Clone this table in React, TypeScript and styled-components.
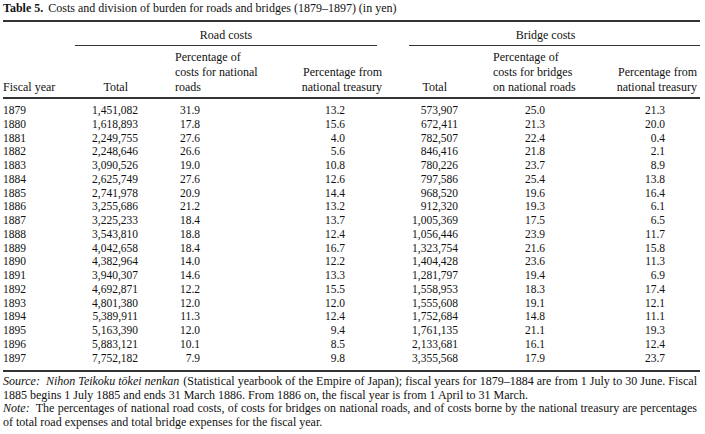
import React from "react";
import styled, { createGlobalStyle } from "styled-components";

const GlobalStyle = createGlobalStyle`
  html, body {
    margin: 0;
    background: #fff;
  }
  body {
    font-family: "Liberation Serif", "Times New Roman", serif;
    color: #111;
  }
`;

const Page = styled.div`
  width: 697px;
  padding-left: 3px;
`;

const Caption = styled.div`
  font-size: 12px;
  line-height: 16px;
  height: 20px;
  white-space: nowrap;
`;

const CaptionLabel = styled.b`
  margin-right: 5px;
`;

const Table = styled.table`
  width: 697px;
  table-layout: fixed;
  border-collapse: collapse;
  border-top: 2px solid #333;
  border-bottom: 2px solid #333;
  font-size: 11.5px;
`;

const GroupCell = styled.th`
  padding: 6px 0 0;
  font-weight: normal;
`;

const GroupRule = styled.div<{ $left: number; $right: number; $shift: number }>`
  margin-left: ${(p) => p.$left}px;
  margin-right: ${(p) => p.$right}px;
  padding-bottom: 3px;
  padding-right: ${(p) => p.$shift}px;
  border-bottom: 1px solid #333;
  line-height: 14px;
  font-size: 12px;
  text-align: center;
`;

const HeadRow = styled.tr`
  border-bottom: 2px solid #333;
`;

const HeadCell = styled.th<{ $align: string; $pad: string }>`
  padding: ${(p) => p.$pad};
  font-weight: normal;
  font-size: 12px;
  line-height: 15px;
  text-align: ${(p) => p.$align};
  vertical-align: bottom;
  white-space: nowrap;
`;

const Body = styled.tbody`
  tr:first-child td {
    padding-top: 5px;
  }
  tr:last-child td {
    padding-bottom: 5px;
  }
`;

const Cell = styled.td<{ $align: string; $pad: number }>`
  padding: 0;
  padding-${(p) => (p.$align === "left" ? "left" : "right")}: ${(p) => p.$pad}px;
  text-align: ${(p) => p.$align};
  line-height: 13.75px;
  white-space: nowrap;
`;

const Notes = styled.div`
  width: 694px;
  margin-top: 3px;
  font-size: 12px;
  line-height: 13.5px;
  p {
    margin: 0;
    text-align: justify;
  }
`;

const NoteLabel = styled.i`
  margin-right: 3px;
`;

const WorkTitle = styled.i`
  margin-right: 1px;
`;

const columns = [
  { width: 72, head: ["Fiscal year"], headAlign: "left", headPad: "4px 0 2px 0", align: "left", pad: 0 },
  { width: 75, head: ["Total"], headAlign: "right", headPad: "4px 22px 2px 0", align: "right", pad: 12 },
  { width: 118, head: ["Percentage of", "costs for national", "roads"], headAlign: "left", headPad: "4px 0 2px 25px", align: "right", pad: 68 },
  { width: 122, head: ["Percentage from", "national treasury"], headAlign: "right", headPad: "4px 8px 2px 0", align: "right", pad: 45 },
  { width: 90, head: ["Total"], headAlign: "right", headPad: "4px 33px 2px 0", align: "right", pad: 22 },
  { width: 110, head: ["Percentage of", "costs for bridges", "on national roads"], headAlign: "left", headPad: "4px 0 2px 13px", align: "right", pad: 45 },
  { width: 110, head: ["Percentage from", "national treasury"], headAlign: "right", headPad: "4px 3px 2px 0", align: "right", pad: 35 },
];

const rows = [
  ["1879", "1,451,082", "31.9", "13.2", "573,907", "25.0", "21.3"],
  ["1880", "1,618,893", "17.8", "15.6", "672,411", "21.3", "20.0"],
  ["1881", "2,249,755", "27.6", "4.0", "782,507", "22.4", "0.4"],
  ["1882", "2,248,646", "26.6", "5.6", "846,416", "21.8", "2.1"],
  ["1883", "3,090,526", "19.0", "10.8", "780,226", "23.7", "8.9"],
  ["1884", "2,625,749", "27.6", "12.6", "797,586", "25.4", "13.8"],
  ["1885", "2,741,978", "20.9", "14.4", "968,520", "19.6", "16.4"],
  ["1886", "3,255,686", "21.2", "13.2", "912,320", "19.3", "6.1"],
  ["1887", "3,225,233", "18.4", "13.7", "1,005,369", "17.5", "6.5"],
  ["1888", "3,543,810", "18.8", "12.4", "1,056,446", "23.9", "11.7"],
  ["1889", "4,042,658", "18.4", "16.7", "1,323,754", "21.6", "15.8"],
  ["1890", "4,382,964", "14.0", "12.2", "1,404,428", "23.6", "11.3"],
  ["1891", "3,940,307", "14.6", "13.3", "1,281,797", "19.4", "6.9"],
  ["1892", "4,692,871", "12.2", "15.5", "1,558,953", "18.3", "17.4"],
  ["1893", "4,801,380", "12.0", "12.0", "1,555,608", "19.1", "12.1"],
  ["1894", "5,389,911", "11.3", "12.4", "1,752,684", "14.8", "11.1"],
  ["1895", "5,163,390", "12.0", "9.4", "1,761,135", "21.1", "19.3"],
  ["1896", "5,883,121", "10.1", "8.5", "2,133,681", "16.1", "12.4"],
  ["1897", "7,752,182", "7.9", "9.8", "3,355,568", "17.9", "23.7"],
];

export default function App() {
  return (
    <Page>
      <GlobalStyle />
      <Caption>
        <CaptionLabel>Table 5.</CaptionLabel>
        Costs and division of burden for roads and bridges (1879–1897) (in yen)
      </Caption>
      <Table>
        <colgroup>
          {columns.map((c, i) => (
            <col key={i} style={{ width: c.width }} />
          ))}
        </colgroup>
        <thead>
          <tr>
            <GroupCell />
            <GroupCell colSpan={3}>
              <GroupRule $left={0} $right={13} $shift={0}>Road costs</GroupRule>
            </GroupCell>
            <GroupCell colSpan={3}>
              <GroupRule $left={19} $right={0} $shift={18}>Bridge costs</GroupRule>
            </GroupCell>
          </tr>
          <HeadRow>
            {columns.map((c, i) => (
              <HeadCell key={i} $align={c.headAlign} $pad={c.headPad}>
                {c.head.map((line, j) => (
                  <React.Fragment key={j}>
                    {j > 0 && <br />}
                    {line}
                  </React.Fragment>
                ))}
              </HeadCell>
            ))}
          </HeadRow>
        </thead>
        <Body>
          {rows.map((r) => (
            <tr key={r[0]}>
              {r.map((v, i) => (
                <Cell key={i} $align={columns[i].align} $pad={columns[i].pad}>
                  {v}
                </Cell>
              ))}
            </tr>
          ))}
        </Body>
      </Table>
      <Notes>
        <p>
          <NoteLabel>Source:</NoteLabel> <WorkTitle>Nihon Teikoku tōkei nenkan</WorkTitle> (Statistical yearbook of
          the Empire of Japan); fiscal years for 1879–1884 are from 1 July to 30 June. Fiscal 1885 begins 1 July 1885
          and ends 31 March 1886. From 1886 on, the fiscal year is from 1 April to 31 March.
        </p>
        <p>
          <NoteLabel>Note:</NoteLabel> The percentages of national road costs, of costs for bridges on national roads,
          and of costs borne by the national treasury are percentages of total road expenses and total bridge expenses
          for the fiscal year.
        </p>
      </Notes>
    </Page>
  );
}
